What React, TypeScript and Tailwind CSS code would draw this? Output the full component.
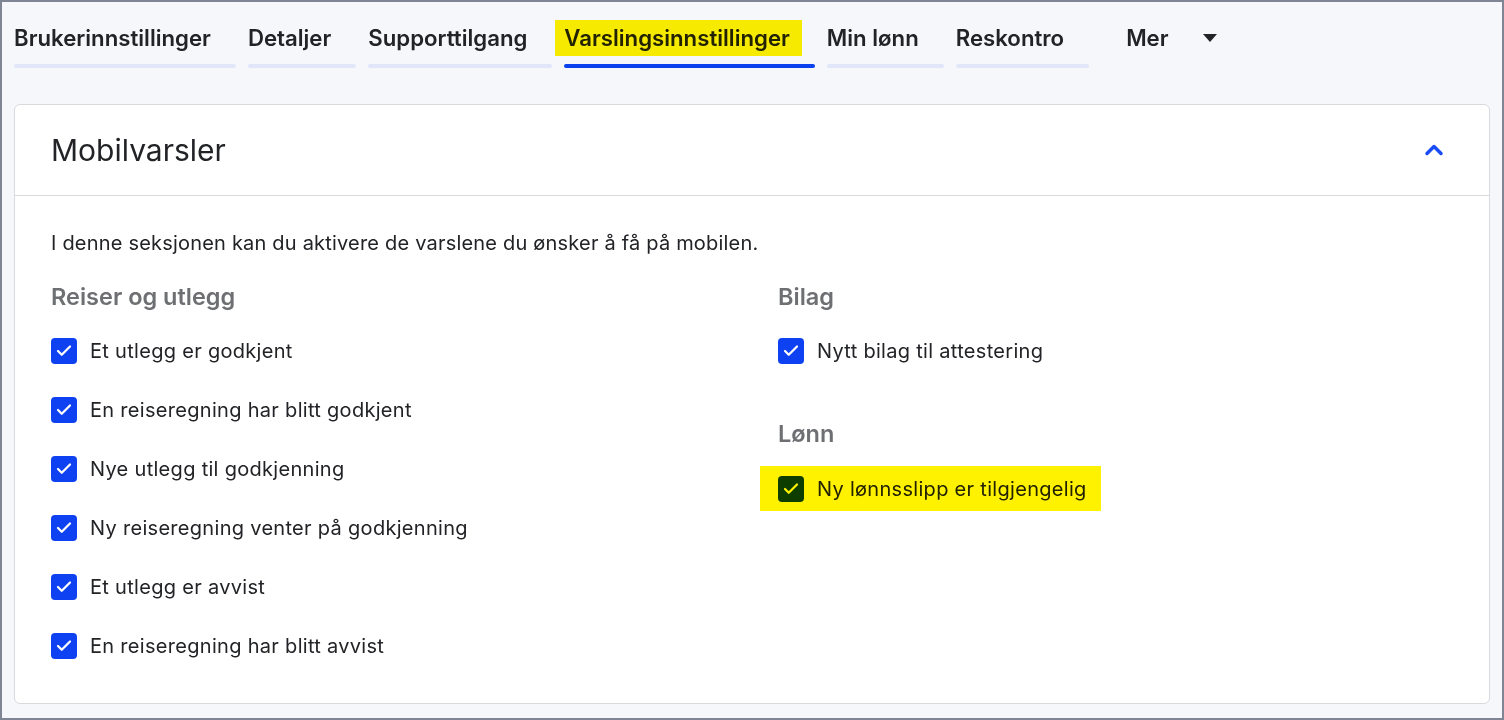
import { ChevronUp, Check } from "lucide-react";

const TABS = [
  { label: "Brukerinnstillinger" },
  { label: "Detaljer" },
  { label: "Supporttilgang" },
  { label: "Varslingsinnstillinger", active: true },
  { label: "Min lønn" },
  { label: "Reskontro" },
];

const REISER = [
  "Et utlegg er godkjent",
  "En reiseregning har blitt godkjent",
  "Nye utlegg til godkjenning",
  "Ny reiseregning venter på godkjenning",
  "Et utlegg er avvist",
  "En reiseregning har blitt avvist",
];

function CheckRow({ label }: { label: string }) {
  return (
    <label className="flex items-center gap-[13px] h-[26px]">
      <span className="w-[26px] h-[26px] rounded-[4px] bg-[#0d41f2] flex items-center justify-center">
        <Check size={18} strokeWidth={3} className="text-white" />
      </span>
      <span className="text-[20px] tracking-[0.3px] text-[#222326] leading-[26px]">{label}</span>
    </label>
  );
}

export default function App() {
  return (
    <div
      className="w-[1504px] h-[720px] border-2 border-[#7f8595] bg-[#f6f7fb] flex flex-col overflow-hidden"
      style={{ fontFamily: "Inter, 'Noto Sans', sans-serif" }}
    >
      {/* Tabs */}
      <div className="flex items-start pl-[12px] pt-[18px] gap-[12px]">
        {TABS.map((t) => (
          <div key={t.label} className="flex flex-col">
            <div className="relative h-[36px] flex items-center pr-[25px]">
              <span className="relative text-[22.2px] font-semibold text-[#222326] leading-[36px] whitespace-nowrap">
                {t.label}
              </span>
              {t.active && (
                <span className="absolute left-[-9px] right-[13px] top-0 bottom-0 bg-[#fff200] mix-blend-multiply" />
              )}
            </div>
            <div
              className={`mt-[8px] h-[4px] rounded-[2px] ${
                t.active ? "bg-[#0a40ee]" : "bg-[#e1e7f8]"
              }`}
            />
          </div>
        ))}
        <div className="ml-[25px] h-[36px] flex items-center gap-[34px]">
          <span className="text-[22.2px] font-semibold text-[#222326] leading-[36px]">Mer</span>
          <svg width="14" height="8" viewBox="0 0 14 8">
            <path d="M0 0 L14 0 L7 8 Z" fill="#222326" />
          </svg>
        </div>
      </div>

      {/* Card */}
      <div className="mx-[12px] mt-[36px] bg-white border border-[#d9dade] rounded-[6px] flex flex-col">
        <div className="h-[91px] flex items-center justify-between pl-[36px] pr-[41px] border-b border-[#d9dade]">
          <h2 className="text-[30px] text-[#222326] font-normal">Mobilvarsler</h2>
          <ChevronUp size={28} strokeWidth={3} className="text-[#1a4cf5]" />
        </div>

        <div className="pl-[36px] pt-[33px] pb-[44px]">
          <p className="text-[20px] tracking-[0.2px] leading-[28px] text-[#222326]">
            I denne seksjonen kan du aktivere de varslene du ønsker å få på mobilen.
          </p>
          <div className="grid grid-cols-[727px_1fr] mt-[26px]">
            <div className="flex flex-col">
              <h3 className="text-[23.5px] font-semibold leading-[28px] text-[#6e6f72]">Reiser og utlegg</h3>
              <div className="flex flex-col gap-[33px] mt-[27px]">
                {REISER.map((r) => (
                  <CheckRow key={r} label={r} />
                ))}
              </div>
            </div>
            <div className="flex flex-col">
              <h3 className="text-[23.5px] font-semibold leading-[28px] text-[#6e6f72]">Bilag</h3>
              <div className="mt-[27px]">
                <CheckRow label="Nytt bilag til attestering" />
              </div>
              <h3 className="mt-[56px] text-[23.5px] font-semibold leading-[28px] text-[#6e6f72]">Lønn</h3>
              <div className="mt-[28px] relative self-start">
                <CheckRow label="Ny lønnsslipp er tilgjengelig" />
                <span className="absolute left-[-18px] right-[-14px] top-[-10px] bottom-[-9px] bg-[#fff200] mix-blend-multiply" />
              </div>
            </div>
          </div>
        </div>
      </div>
    </div>
  );
}
